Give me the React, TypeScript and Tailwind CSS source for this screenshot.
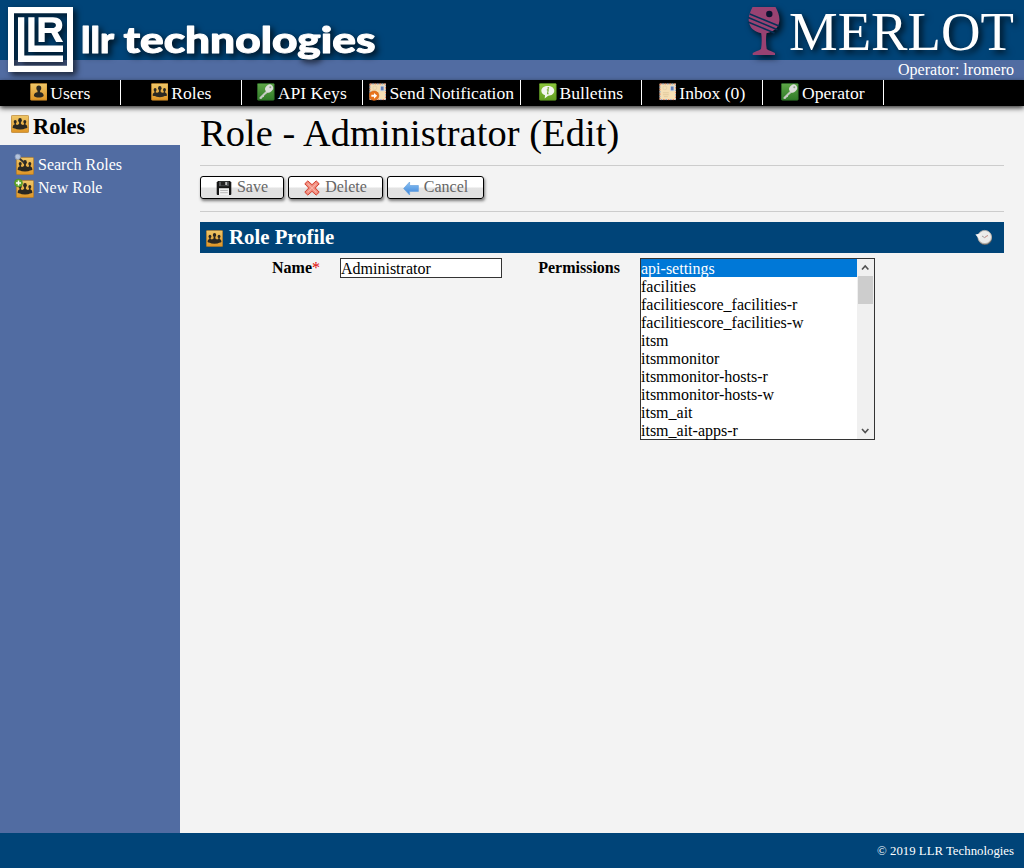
import type { ReactNode } from "react";

function Defs() {
  return (
    <svg className="absolute h-0 w-0" aria-hidden="true">
      <defs>
        <linearGradient id="gold" x1="0" y1="0" x2="0" y2="1">
          <stop offset="0" stopColor="#efc768" />
          <stop offset="1" stopColor="#df9525" />
        </linearGradient>
        <linearGradient id="green" x1="0" y1="0" x2="0" y2="1">
          <stop offset="0" stopColor="#5fa648" />
          <stop offset="1" stopColor="#2f7a27" />
        </linearGradient>
        <linearGradient id="lime" x1="0" y1="0" x2="0" y2="1">
          <stop offset="0" stopColor="#8cc63c" />
          <stop offset="1" stopColor="#629e20" />
        </linearGradient>
        <linearGradient id="sky" x1="0" y1="0" x2="0" y2="1">
          <stop offset="0" stopColor="#8cc4f4" />
          <stop offset="1" stopColor="#3b82d8" />
        </linearGradient>
        <g id="crowd" fill="#2a2822">
          <ellipse cx="4.200" cy="6.800" rx="1.500" ry="1.800" />
          <ellipse cx="13.800" cy="6.800" rx="1.500" ry="1.800" />
          <ellipse cx="9" cy="5.300" rx="1.800" ry="2.200" />
          <path d="M1.600 12.800q0-2.800 1.900-3.200V8h1.400v1.600l1.500.5q.5-.7 1.700-1V7h1.800v2.100q1.200.3 1.700 1l1.500-.5V8h1.400v1.600q1.900.4 1.900 3.200-.8.500-2.400.6-1 1.100-5 1.100t-5-1.100q-1.600-.1-2.400-.6z" />
        </g>
      </defs>
    </svg>
  );
}

type IconProps = { className?: string };

function UserIcon({ className = "" }: IconProps) {
  return (
    <svg viewBox="0 0 18 18" className={className}>
      <rect x=".4" y=".4" width="17.200" height="17.200" rx="1" fill="url(#gold)" stroke="#b57a24" strokeWidth=".7" />
      <path d="M9 2.500a2.500 2.700 0 0 1 2.500 2.800c0 1.200-.6 2-1.200 2.700v1.500c2.300.3 3.700 1 3.700 3.700-1.300 1.300-3.100 1.700-5 1.700s-3.700-.4-5-1.700c0-2.700 1.400-3.400 3.700-3.700V8c-.6-.7-1.200-1.500-1.200-2.700A2.500 2.700 0 0 1 9 2.500z" fill="#2a2822" />
    </svg>
  );
}

function GroupIcon({ className = "" }: IconProps) {
  return (
    <svg viewBox="0 0 18 18" className={className}>
      <rect x=".4" y=".4" width="17.200" height="17.200" rx="1" fill="url(#gold)" stroke="#b57a24" strokeWidth=".7" />
      <use href="#crowd" />
    </svg>
  );
}

function KeyIcon({ className = "" }: IconProps) {
  return (
    <svg viewBox="0 0 18 18" className={className}>
      <rect x=".4" y=".4" width="17.200" height="17.200" rx="1" fill="url(#green)" stroke="#2c6b28" strokeWidth=".7" />
      <path d="M10 7.500 2.500 14.900l.3 1.500 2-.3 1-1.500 1.200-.2.400-1.500 4.200-3.800z" fill="#c5cac3" />
      <ellipse cx="12.400" cy="5.600" rx="4.300" ry="3.700" transform="rotate(-45 12.4 5.6)" fill="#dcdedb" />
      <circle cx="13.600" cy="4.400" r="1" fill="#8aa086" />
    </svg>
  );
}

function Envelope() {
  return (
    <>
      <rect x=".6" y=".6" width="16.800" height="16.800" fill="#f5dfb4" />
      <rect x="1" y="1" width="16" height="16" fill="none" stroke="#dd7a60" strokeWidth="1" strokeDasharray="1.600 3.200" />
      <rect x="1" y="1" width="16" height="16" fill="none" stroke="#7f9bc8" strokeWidth="1" strokeDasharray="1.600 3.200" strokeDashoffset="2.400" />
      <rect x="11.700" y="3.200" width="3.600" height="4.800" fill="#5f7db8" stroke="#cfd6e2" strokeWidth=".8" />
      <circle cx="6" cy="5" r="2" fill="none" stroke="#e0cfa8" strokeWidth=".8" />
      <path d="M4 10h6M4 12h6M5 14h4" stroke="#dcc598" strokeWidth=".8" />
    </>
  );
}

function InboxIcon({ className = "" }: IconProps) {
  return (
    <svg viewBox="0 0 18 18" className={className}>
      <Envelope />
    </svg>
  );
}

function SendIcon({ className = "" }: IconProps) {
  return (
    <svg viewBox="0 0 18 18" className={className}>
      <Envelope />
      <circle cx="5.200" cy="13" r="4.900" fill="#e8741c" stroke="#c85a10" strokeWidth=".5" />
      <path d="M2.400 12.100h2.700v-1.900l3.200 2.900L5.100 16v-1.900H2.400z" fill="#fff" />
    </svg>
  );
}

function BulletinIcon({ className = "" }: IconProps) {
  return (
    <svg viewBox="0 0 18 18" className={className}>
      <rect x=".4" y=".4" width="17.200" height="17.200" rx="1" fill="url(#lime)" stroke="#5d9423" strokeWidth=".7" />
      <path d="M9 3c3.900 0 6.600 2 6.600 5s-2.700 5-6.200 5.100L5.800 15.800l.4-3.200C3.800 11.700 2.400 10.200 2.400 8c0-3 2.700-5 6.600-5z" fill="#f3f5ef" />
      <circle cx="9.500" cy="5" r=".9" fill="#76ad36" />
      <path d="M8 7h1.500l-.8 4h1.200" fill="none" stroke="#76ad36" strokeWidth="1.100" />
    </svg>
  );
}

function SearchRolesIcon() {
  return (
    <svg viewBox="0 0 20 22" className="h-[22px] w-5 shrink-0">
      <g transform="translate(2 4)">
        <rect x=".4" y=".4" width="17.200" height="17.200" rx="1" fill="url(#gold)" stroke="#b57a24" strokeWidth=".7" />
        <use href="#crowd" />
      </g>
      <path d="m5.500 5.500 5 4.500" stroke="#34322e" strokeWidth="1.800" />
      <circle cx="3.800" cy="3.800" r="2.700" fill="#b4c4dd" stroke="#8798b8" strokeWidth=".8" />
    </svg>
  );
}

function NewRoleIcon() {
  return (
    <svg viewBox="0 0 20 22" className="h-[22px] w-5 shrink-0">
      <g transform="translate(2 4)">
        <rect x=".4" y=".4" width="17.200" height="17.200" rx="1" fill="url(#gold)" stroke="#b57a24" strokeWidth=".7" />
        <use href="#crowd" />
      </g>
      <circle cx="4.500" cy="7" r="4" fill="#63a82f" stroke="#4a8a1f" strokeWidth=".6" />
      <path d="M4.500 4.500v5M2 7h5" stroke="#fff" strokeWidth="1.500" />
    </svg>
  );
}

function SaveIcon() {
  return (
    <svg viewBox="0 0 16 16" className="h-4 w-4">
      <path d="M2 1h12l1.300 1.500V14q0 1-1 1H1.700q-1 0-1-1V2.500z" fill="#161616" />
      <path d="M3 1.600h9.800v4.600H3z" fill="#55585a" />
      <path d="M5 2h5.500v3.500H5z" fill="#222" />
      <path d="M9.200 2h1.800v3H9.200z" fill="#bbb" />
      <path d="M3 8.200h10V15H3z" fill="#f1f1f1" />
      <path d="M4.200 10.500h7.600M4.200 12.700h7.600" stroke="#aaa" strokeWidth=".8" />
    </svg>
  );
}

function DeleteIcon() {
  return (
    <svg viewBox="0 0 16 16" className="h-4 w-4">
      <path d="M3.800.9 8 4.700 12.200.9l3 2.900L11.300 8l3.900 4.200-3 2.900L8 11.300l-4.200 3.800-3-2.900L4.700 8 .8 3.800z" fill="#f08a7b" stroke="#d4402f" strokeWidth="1" strokeLinejoin="round" />
      <path d="m3.600 3.600 8.800 8.800M12.400 3.600l-8.800 8.800" stroke="#f7b5a9" strokeWidth="1.200" />
    </svg>
  );
}

function BackIcon() {
  return (
    <svg viewBox="0 0 16 16" className="h-4 w-4">
      <path d="M.6 8.500 6.600 2v3.500h8.800v6H6.600V15z" fill="url(#sky)" stroke="#6aa3e0" strokeWidth=".7" strokeLinejoin="round" />
    </svg>
  );
}

function HistoryIcon() {
  return (
    <svg viewBox="0 0 18 18" className="h-[18px] w-[18px]">
      <ellipse cx="10" cy="9" rx="7" ry="7" fill="#6f6b66" />
      <ellipse cx="9.700" cy="8" rx="6.800" ry="6.600" fill="#ececea" stroke="#b5b2ad" strokeWidth=".9" />
      <path d="m.4 5.500 5-.9-.6 6.200z" fill="#f5f5f5" />
      <path d="m7 7 2.500 1.600L13 6.200" fill="none" stroke="#999" strokeWidth=".9" />
      <path d="m9.500 8.600 3.500-2.100" stroke="#e09a90" strokeWidth=".8" />
    </svg>
  );
}

function CompanyLogo() {
  return (
    <svg viewBox="0 0 400 80" className="h-20 w-[400px] overflow-visible [filter:drop-shadow(3px_3px_3px_rgba(0,0,0,.75))]">
      <path d="M8 7h65v65H8zM14 13.200v52.600h53V13.200z" fill="#fff" fillRule="evenodd" />
      <path d="M18 17.300h6.300v38.200H63V62H18z" fill="#fff" />
      <path d="M28.300 17.300h6.200v28.200H63V52H28.300z" fill="#fff" />
      <path d="M38.500 17.300H53c6 0 9.300 3 9.300 7.900 0 3.500-1.700 5.900-4.700 7l5.500 9.800h-7l-4.800-9h-6.600v9h-6.200zm6.200 5.200V28H52c2.500 0 3.900-.9 3.900-2.800S54.500 22.500 52 22.500z" fill="#fff" fillRule="evenodd" />
      <g fill="#fff" stroke="#fff" strokeWidth="1" strokeLinejoin="round" fontFamily="Lato, sans-serif" fontWeight="900" fontSize="36">
        <text x="81" y="53.200" textLength="33" lengthAdjust="spacingAndGlyphs">llr</text>
        <text x="123.500" y="53.200" textLength="252" lengthAdjust="spacingAndGlyphs">technologies</text>
      </g>
    </svg>
  );
}

function MerlotLogo() {
  return (
    <svg viewBox="0 0 280 60" className="h-[60px] w-[280px] overflow-visible [filter:drop-shadow(3px_3px_3px_rgba(0,0,0,.75))]">
      <path d="M8.500 7h23c2.800 5 4.500 10 3.800 14.500-.8 6-4.600 10-12.800 11.800-.8 5-.6 11 .2 15.700 2.300 2 5.800 2.200 8.300 4v2H8.700v-2c2.500-1.800 6-2 8.300-4 .8-4.700 1-10.700.2-15.700C9.500 31.500 5.700 27.500 4.800 21.500 4.100 17 6 12 8.500 7z" fill="#994272" />
      <path d="m5.800 14 29.200 12M4.300 17.500l29.200 12.200M4 22l26.500 11" stroke="#063058" strokeWidth="1.500" />
      <circle cx="25.300" cy="14" r="3.200" fill="#0b1230" />
      <text x="45" y="50" fill="#fff" fontFamily="'Liberation Serif', serif" fontSize="55.500" textLength="225" lengthAdjust="spacingAndGlyphs">MERLOT</text>
    </svg>
  );
}

function NavItem({ icon, label, wide }: { icon: ReactNode; label: string; wide?: boolean }) {
  return (
    <a className={`flex h-[25px] items-center justify-center gap-[3px] border-r border-white text-[17.6px] whitespace-nowrap text-white ${wide ? "w-[158px]" : "w-[121px]"}`}>
      {icon}
      <span className="pt-px leading-[25px]">{label}</span>
    </a>
  );
}

function Button({ icon, label, width }: { icon: ReactNode; label: string; width: string }) {
  return (
    <button className={`flex h-[23px] items-center justify-center gap-[5px] rounded-[3px] border border-black bg-linear-to-b from-white from-45% to-[#e2e2e2] to-55% text-[16px] leading-[20px] text-[#666] shadow-[1px_2px_3px_rgba(0,0,0,.5)] ${width}`}>
      {icon}
      <span className="-mt-0.5">{label}</span>
    </button>
  );
}

const iconSize = "h-[17.600px] w-[17.600px] shrink-0 -mt-px";

const permissions = [
  "api-settings",
  "facilities",
  "facilitiescore_facilities-r",
  "facilitiescore_facilities-w",
  "itsm",
  "itsmmonitor",
  "itsmmonitor-hosts-r",
  "itsmmonitor-hosts-w",
  "itsm_ait",
  "itsm_ait-apps-r",
];

export default function App() {
  return (
    <div className="flex h-[868px] w-[1024px] flex-col overflow-hidden bg-[#f3f3f3] font-['Liberation_Serif',serif] text-[16px] text-black">
      <Defs />
      <header className="flex h-20 shrink-0 justify-between bg-[linear-gradient(#004478_60px,#516ca2_60px)]">
        <CompanyLogo />
        <div className="flex w-[280px] flex-col">
          <MerlotLogo />
          <div className="pr-2.5 text-right leading-[20px] text-white">Operator: lromero</div>
        </div>
      </header>

      <nav className="relative flex h-[26px] shrink-0 bg-black shadow-[0_2px_5px_rgba(0,0,0,.8)]">
        <NavItem icon={<UserIcon className={iconSize} />} label="Users" />
        <NavItem icon={<GroupIcon className={iconSize} />} label="Roles" />
        <NavItem icon={<KeyIcon className={iconSize} />} label="API Keys" />
        <NavItem icon={<SendIcon className={iconSize} />} label="Send Notification" wide />
        <NavItem icon={<BulletinIcon className={iconSize} />} label="Bulletins" />
        <NavItem icon={<InboxIcon className={iconSize} />} label="Inbox (0)" />
        <NavItem icon={<KeyIcon className={iconSize} />} label="Operator" />
      </nav>

      <div className="flex min-h-0 flex-1">
        <aside className="flex w-[180px] shrink-0 flex-col bg-[#516ca2]">
          <h2 className="flex h-[39px] gap-1 bg-[#f3f3f3] pt-2 pl-[11px] text-[22.4px] leading-[26px] font-bold">
            <GroupIcon className="mt-px h-[18px] w-[18px] shrink-0" />
            <span>Roles</span>
          </h2>
          <ul className="flex flex-col pt-2 pl-3.5 text-white">
            <li className="flex h-[23px] gap-1 leading-[24px]">
              <SearchRolesIcon />
              <span>Search Roles</span>
            </li>
            <li className="flex h-[23px] gap-1 leading-[24px]">
              <NewRoleIcon />
              <span>New Role</span>
            </li>
          </ul>
        </aside>

        <main className="flex-1 pr-5 pl-5">
          <h1 className="h-[59px] pt-[5px] text-[38.4px] leading-[44px] tracking-[0.09px]">Role - Administrator (Edit)</h1>
          <div className="flex h-[47px] gap-1 border-y border-[#ccc] pt-2.5">
            <Button icon={<SaveIcon />} label="Save" width="w-[84px]" />
            <Button icon={<DeleteIcon />} label="Delete" width="w-[95px]" />
            <Button icon={<BackIcon />} label="Cancel" width="w-[97px]" />
          </div>
          <section className="pt-2.5">
            <div className="flex h-[31px] items-center bg-[#004478] pr-[11px] pl-1.5 text-white">
              <GroupIcon className="mt-px h-[17px] w-[17px]" />
              <h3 className="-mt-px flex-1 pl-1.5 text-[20.8px] leading-[30px] font-bold">Role Profile</h3>
              <HistoryIcon />
            </div>
            <div className="flex pt-[5px]">
              <label className="w-[120px] text-right leading-[20px] font-bold">
                Name<span className="font-normal text-[#e00000]">*</span>
              </label>
              <div className="ml-5 flex h-5 w-[162px] items-center border border-[#333] bg-white leading-[18px]">
                <span className="pt-0.5">Administrator</span>
              </div>
              <label className="w-[118px] text-right leading-[20px] font-bold">Permissions</label>
              <div className="ml-5 flex h-[182px] w-[235px] border border-[#333] bg-white">
                <ul className="flex-1">
                  {permissions.map((name, i) => (
                    <li key={name} className={`h-[18px] pt-px leading-[18px] ${i === 0 ? "bg-[#0078d7] text-white" : ""}`}>
                      {name}
                    </li>
                  ))}
                </ul>
                <div className="flex w-[17px] flex-col bg-[#f0f0f0] pl-px">
                  <svg viewBox="0 0 17 17" className="h-[17px] w-[17px]">
                    <path d="m4 10.500 3.200-3.500 3.200 3.500" fill="none" stroke="#505050" strokeWidth="1.600" />
                  </svg>
                  <div className="h-7 w-[15px] bg-[#cdcdcd]" />
                  <svg viewBox="0 0 17 17" className="mt-auto h-[17px] w-[17px]">
                    <path d="m4 7 3.200 3.500L10.400 7" fill="none" stroke="#505050" strokeWidth="1.600" />
                  </svg>
                </div>
              </div>
            </div>
          </section>
        </main>
      </div>

      <footer className="h-[35px] shrink-0 bg-[#004478] pr-2.5 text-right text-[12.8px] leading-[36px] text-white">© 2019 LLR Technologies</footer>
    </div>
  );
}
